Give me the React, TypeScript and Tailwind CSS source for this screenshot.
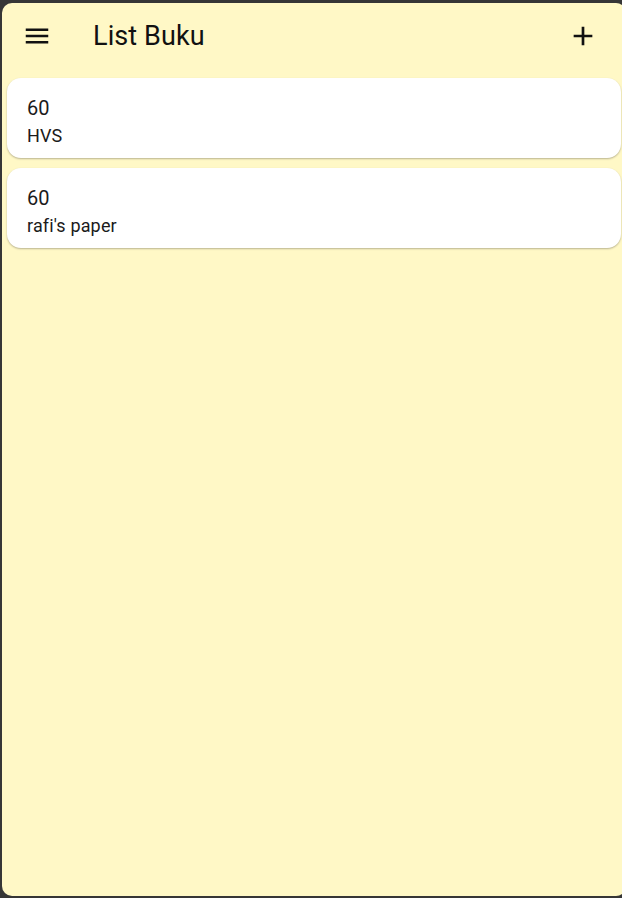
const books = [
  { jumlah: '60', nama: 'HVS' },
  { jumlah: '60', nama: "rafi's paper" },
]

function MenuIcon() {
  return (
    <svg width="30" height="30" viewBox="0 0 24 24" fill="currentColor">
      <path d="M3 18h18v-2H3v2zm0-5h18v-2H3v2zm0-7v2h18V6H3z" />
    </svg>
  )
}

function AddIcon() {
  return (
    <svg width="32" height="32" viewBox="0 0 24 24" fill="currentColor">
      <path d="M19 13h-6v6h-2v-6H5v-2h6V5h2v6h6v2z" />
    </svg>
  )
}

export default function App() {
  return (
    <div
      className="w-[622px] h-[898px] overflow-hidden bg-[#363636] pl-[2px] pt-[3px] pb-[2px]"
      style={{ fontFamily: 'Roboto, "Noto Sans", sans-serif' }}
    >
      <div className="w-[624px] h-full rounded-[10px] bg-[#fff8c6] flex flex-col">
        {/* AppBar */}
        <div className="h-[66px] flex items-center shrink-0 text-[#111]">
          <div className="ml-[20px] flex items-center">
            <MenuIcon />
          </div>
          <div className="ml-[41px] text-[27px] leading-none tracking-[0.1px]">List Buku</div>
          <div className="ml-auto mr-[27px] flex items-center">
            <AddIcon />
          </div>
        </div>

        {/* List */}
        <div className="flex flex-col gap-[10px] px-[5px] pt-[9px]">
          {books.map((b, i) => (
            <div
              key={i}
              className="h-[80px] bg-white rounded-[14px] shadow-[0_1px_2px_rgba(0,0,0,0.28)] pl-[20px] pt-[18px] text-[#1b1b1b]"
            >
              <div className="text-[20px] leading-[24px]">{b.jumlah}</div>
              <div className="text-[18px] leading-[32px] tracking-[0.15px]">{b.nama}</div>
            </div>
          ))}
        </div>
      </div>
    </div>
  )
}
